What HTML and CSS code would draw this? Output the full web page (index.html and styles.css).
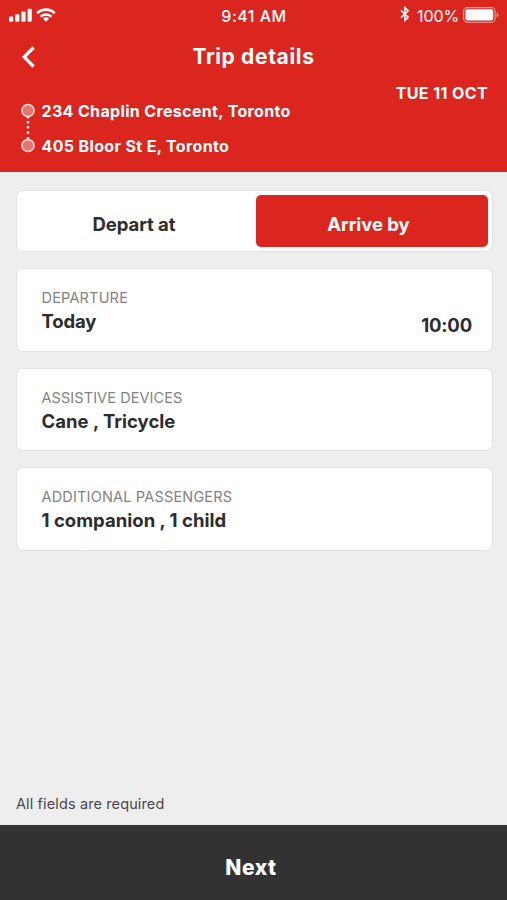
FILE: index.html
```html
<!DOCTYPE html>
<html lang="en">
<head>
<meta charset="utf-8">
<title>Trip details</title>
<link rel="stylesheet" href="styles.css">
</head>
<body>
<div class="screen">
  <header class="header">
    <div class="status">
      <div class="status-left">
        <svg class="signal" width="24" height="14" viewBox="0 0 24 14"><g fill="#fff"><rect x="0" y="8.5" width="4.2" height="5.3" rx="1"/><rect x="6.2" y="6.3" width="4.2" height="7.5" rx="1"/><rect x="12.4" y="3.6" width="4.2" height="10.2" rx="1"/><rect x="18.6" y="0.8" width="4.2" height="13" rx="1"/></g></svg>
        <svg class="wifi" width="20" height="14" viewBox="0 0 20 14"><g fill="none" stroke="#fff" stroke-width="2.6"><path d="M1.2 5.2a12.6 12.6 0 0 1 17.6 0"/><path d="M4.5 8.7a7.8 7.8 0 0 1 11 0"/></g><path d="M6.9 10.5a4.4 4.4 0 0 1 6.2 0L10 13.7z" fill="#fff"/></svg>
      </div>
      <span class="clock">9:41 AM</span>
      <div class="status-right">
        <svg class="bluetooth" width="10" height="16" viewBox="0 0 10 16"><path d="M1 4.4l7.2 6.9L5 14.6V1.4l3.2 3.3L1 11.6" fill="none" stroke="#fff" stroke-width="1.5"/></svg>
        <span class="percent">100%</span>
        <svg class="battery" width="36" height="16" viewBox="0 0 36 16"><rect x=".6" y=".6" width="31.5" height="14.6" rx="3.8" fill="none" stroke="#f3a5a0" stroke-width="1.1"/><rect x="2.4" y="2.3" width="27.8" height="11.2" rx="2" fill="#fff"/><path d="M33.6 5.4a2.6 2.6 0 0 1 0 5z" fill="#f3a5a0"/></svg>
      </div>
    </div>
    <div class="nav">
      <svg class="back" width="14" height="22" viewBox="0 0 14 22"><path d="M12.6 1.5L3.2 11l9.4 9.5" fill="none" stroke="#fff" stroke-width="3.2"/></svg>
      <h1 class="title">Trip details</h1>
    </div>
    <div class="route">
      <svg class="track" width="14" height="50" viewBox="0 0 14 50"><g fill="#e8746f" stroke="#fbdedc" stroke-width="1.5"><circle cx="7" cy="7.5" r="6.1"/><circle cx="7" cy="42.5" r="6.1"/></g><g fill="#fff"><rect x="5.8" y="13" width="2.4" height="2.4"/><rect x="5.8" y="18" width="2.4" height="2.4"/><rect x="5.8" y="23" width="2.4" height="2.4"/><rect x="5.8" y="28.5" width="2.4" height="2.4"/><rect x="5.8" y="34" width="2.4" height="2.4"/></g></svg>
      <div class="stops">
        <span class="stop">234 Chaplin Crescent, Toronto</span>
        <span class="stop">405 Bloor St E, Toronto</span>
      </div>
      <span class="date">TUE 11 OCT</span>
    </div>
  </header>
  <main class="main">
    <div class="toggle">
      <button class="option depart">Depart at</button>
      <button class="option selected">Arrive by</button>
    </div>
    <section class="card">
      <div><div class="label">DEPARTURE</div><div class="value">Today</div></div>
      <div class="value time">10:00</div>
    </section>
    <section class="card">
      <div><div class="label devices">ASSISTIVE DEVICES</div><div class="value list">Cane , Tricycle</div></div>
    </section>
    <section class="card">
      <div><div class="label">ADDITIONAL PASSENGERS</div><div class="value list">1 companion , 1 child</div></div>
    </section>
    <p class="note">All fields are required</p>
  </main>
  <button class="next">Next</button>
</div>
</body>
</html>
```
FILE: styles.css
```css
* { box-sizing: border-box; }
body { margin: 0; font-family: Inter, "Liberation Sans", sans-serif; color: #2d2d2d; }
button { border: 0; padding: 0; font: inherit; color: inherit; background: none; }
svg { display: block; flex: none; }
.screen { width: 507px; height: 900px; display: flex; flex-direction: column; background: #eee; overflow: hidden; }
.header { height: 172px; flex: none; background: #db261f; color: #fff; }
.status { height: 31px; padding: 0 8px 0 9px; display: grid; grid-template-columns: 1fr auto 1fr; align-items: center; }
.status-left { display: flex; gap: 3px; padding-bottom: 2px; }
.status-right { display: flex; justify-content: flex-end; align-items: center; gap: 6px; }
.bluetooth { margin: -4px 1px 0 0; }
.battery { margin-top: -1px; }
.percent { font-size: 16px; line-height: 20px; font-weight: 400; margin-top: 1px; margin-right: -2px; letter-spacing: -.1px; }
.clock { font-size: 16px; line-height: 20px; font-weight: 500; letter-spacing: .5px; }
.nav { height: 52px; display: grid; grid-template-columns: 60px 1fr 60px; align-items: center; }
.back { margin-left: 21px; }
.title { margin: 0; font-size: 21px; line-height: 26px; font-weight: 700; text-align: center; letter-spacing: .65px; }
.route { display: flex; padding: 0 19px 0 21px; }
.track { margin-top: 20px; }
.stops { display: flex; flex-direction: column; gap: 15px; margin: 18px 0 0 6.5px; flex: 1; align-items: flex-start; }
.stop { font-size: 16px; line-height: 20px; font-weight: 700; letter-spacing: .35px; }
.date { font-size: 16px; line-height: 20px; font-weight: 700; letter-spacing: .4px; }
.main { flex: 1; padding: 18px 14px 0 16px; display: flex; flex-direction: column; }
.toggle { height: 62px; flex: none; padding: 4px; background: #fff; border: 1px solid #e2e2e2; border-radius: 7px; display: grid; grid-template-columns: 235px 1fr; margin-bottom: 16px; }
.option { font-size: 18.5px; line-height: 24px; font-weight: 700; padding-top: 5px; letter-spacing: -.05px; }
.depart { padding-right: 9px; }
.selected { background: #db261f; color: #fff; border-radius: 5px; padding-right: 7px; }
.card { height: 83.5px; flex: none; margin-bottom: 16px; padding: 19px 20px 0 24.5px; background: #fff; border: 1px solid #e2e2e2; border-radius: 7px; display: flex; justify-content: space-between; }
.label { font-size: 14.5px; line-height: 20px; color: #828282; letter-spacing: .18px; }
.devices { letter-spacing: .08px; }
.value { font-size: 18.5px; line-height: 24px; font-weight: 700; margin-top: 1px; letter-spacing: -.15px; }
.list { letter-spacing: .02px; }
.time { margin-top: 25px; }
.note { margin: auto 0 11px; font-size: 14.5px; line-height: 20px; color: #4a4a4a; letter-spacing: .12px; }
.next { height: 75px; flex: none; background: #323232; color: #fff; font-size: 21px; line-height: 26px; font-weight: 800; letter-spacing: .6px; padding: 10px 5px 0 0; }
```
